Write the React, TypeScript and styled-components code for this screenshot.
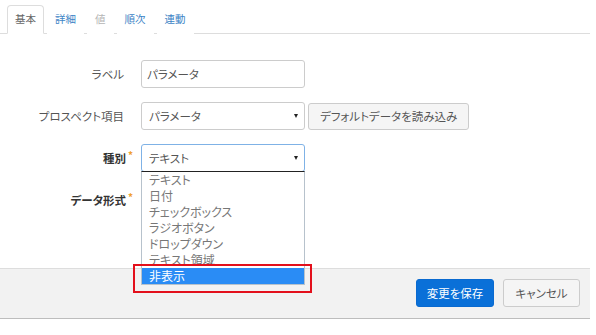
import styled, { createGlobalStyle } from "styled-components";

const GlobalStyle = createGlobalStyle`
  body {
    margin: 0;
    background: #fff;
    font-family: "Noto Sans CJK JP", "Noto Sans", sans-serif;
    font-feature-settings: "palt";
    font-size: 11.5px;
    color: #555;
  }
`;

const tabs = [
  { label: "基本", active: true },
  { label: "詳細" },
  { label: "値", disabled: true },
  { label: "順次" },
  { label: "連動" },
];

const options = [
  "テキスト",
  "日付",
  "チェックボックス",
  "ラジオボタン",
  "ドロップダウン",
  "テキスト領域",
  "非表示",
];

function App() {
  return (
    <>
      <GlobalStyle />
      <Page>
        <TabBar>
          {tabs.map((t) => (
            <Tab key={t.label} $active={t.active} $disabled={t.disabled}>
              {t.label}
            </Tab>
          ))}
        </TabBar>

        <Form>
          <Row>
            <Label>ラベル</Label>
            <TextInput defaultValue="パラメータ" />
          </Row>
          <Row>
            <Label>プロスペクト項目</Label>
            <Controls>
              <Select>
                <span>パラメータ</span>
                <Caret />
              </Select>
              <Button>デフォルトデータを読み込み</Button>
            </Controls>
          </Row>
          <Row>
            <Label $required>種別</Label>
            <SelectWrap>
              <Select $focused>
                <span>テキスト</span>
                <Caret />
              </Select>
              <OptionList>
                {options.map((o, i) => (
                  <OptionItem key={o} $selected={i === options.length - 1}>
                    {o}
                  </OptionItem>
                ))}
                <Highlight />
              </OptionList>
            </SelectWrap>
          </Row>
          <Row>
            <Label $required>データ形式</Label>
            <Select>
              <span />
              <Caret />
            </Select>
          </Row>
        </Form>

        <Footer>
          <PrimaryButton>変更を保存</PrimaryButton>
          <Button $wide>キャンセル</Button>
        </Footer>
      </Page>
    </>
  );
}

export default App;

const Page = styled.div`
  width: 590px;
  position: relative;
`;

const TabBar = styled.div`
  display: flex;
  padding: 5px 0 0 7px;
  border-bottom: 1px solid #ddd;
`;

const Tab = styled.div<{ $active?: boolean; $disabled?: boolean }>`
  height: 27px;
  line-height: 26px;
  padding: 0 7px;
  margin-right: 3px;
  margin-bottom: -1px;
  font-size: 10.5px;
  border: 1px solid ${(p) => (p.$active ? "#ddd" : "transparent")};
  border-bottom-color: ${(p) => (p.$active ? "#fff" : "transparent")};
  border-radius: 4px 4px 0 0;
  background: #fff;
  color: ${(p) => (p.$active ? "#666" : p.$disabled ? "#b5b5b5" : "#3d84c6")};
`;

const Form = styled.div`
  display: flex;
  flex-direction: column;
  gap: 14px;
  padding: 26px 0 54px;
`;

const Row = styled.div`
  display: grid;
  grid-template-columns: 127px auto;
  column-gap: 14px;
  align-items: center;
`;

const Label = styled.div<{ $required?: boolean }>`
  position: relative;
  text-align: right;
  padding-right: ${(p) => (p.$required ? "1px" : "3px")};
  font-weight: ${(p) => (p.$required ? 700 : 400)};
  color: ${(p) => (p.$required ? "#333" : "#555")};
  &::after {
    content: ${(p) => (p.$required ? '"*"' : "none")};
    position: absolute;
    right: -6px;
    top: -3px;
    font-size: 10px;
    color: #f0a030;
  }
`;

const TextInput = styled.input`
  box-sizing: border-box;
  width: 164px;
  height: 28px;
  padding: 0 5px;
  border: 1px solid #ccc;
  border-radius: 3px;
  font: inherit;
  color: #555;
  outline: none;
`;

const Controls = styled.div`
  display: flex;
  align-items: center;
  gap: 3px;
`;

const SelectWrap = styled.div`
  position: relative;
  width: 164px;
`;

const Select = styled.div<{ $focused?: boolean }>`
  box-sizing: border-box;
  width: 164px;
  height: 28px;
  display: flex;
  align-items: center;
  justify-content: space-between;
  padding: 0 6px 0 7px;
  border: 1px solid ${(p) => (p.$focused ? "#7fb2e6" : "#ccc")};
  border-radius: 3px;
  background: #fff;
  color: #555;
`;

const Caret = styled.span`
  width: 0;
  height: 0;
  border-left: 2.5px solid transparent;
  border-right: 2.5px solid transparent;
  border-top: 4px solid #222;
`;

const OptionList = styled.div`
  position: absolute;
  top: 27px;
  left: 0;
  width: 164px;
  box-sizing: border-box;
  border: 1px solid #b7c2cc;
  border-top: 1px solid #222;
  background: #fff;
  z-index: 2;
`;

const OptionItem = styled.div<{ $selected?: boolean }>`
  height: 16px;
  line-height: 16px;
  padding-left: 7px;
  font-size: 12px;
  color: ${(p) => (p.$selected ? "#fff" : "#777")};
  background: ${(p) => (p.$selected ? "#2a8cf5" : "transparent")};
`;

const Highlight = styled.div`
  position: absolute;
  left: -9px;
  top: 92px;
  width: 179px;
  height: 29px;
  box-sizing: border-box;
  border: 2px solid #e3101c;
`;

const Button = styled.button<{ $wide?: boolean }>`
  box-sizing: border-box;
  height: ${(p) => (p.$wide ? "28px" : "27px")};
  width: ${(p) => (p.$wide ? "77px" : "auto")};
  padding: 0 11px;
  white-space: nowrap;
  border: 1px solid #ccc;
  border-radius: 3px;
  background: #f5f5f5;
  font: inherit;
  color: #555;
`;

const PrimaryButton = styled(Button)`
  height: 28px;
  width: 78px;
  padding: 0;
  border-color: #0a6ad0;
  background: #0a70d8;
  color: #fff;
`;

const Footer = styled.div`
  display: flex;
  justify-content: flex-end;
  align-items: center;
  gap: 9px;
  padding: 10px 10px 11px;
  background: #f2f2f2;
  border-top: 1px solid #ddd;
  border-bottom: 1px solid #bdbdbd;
`;
